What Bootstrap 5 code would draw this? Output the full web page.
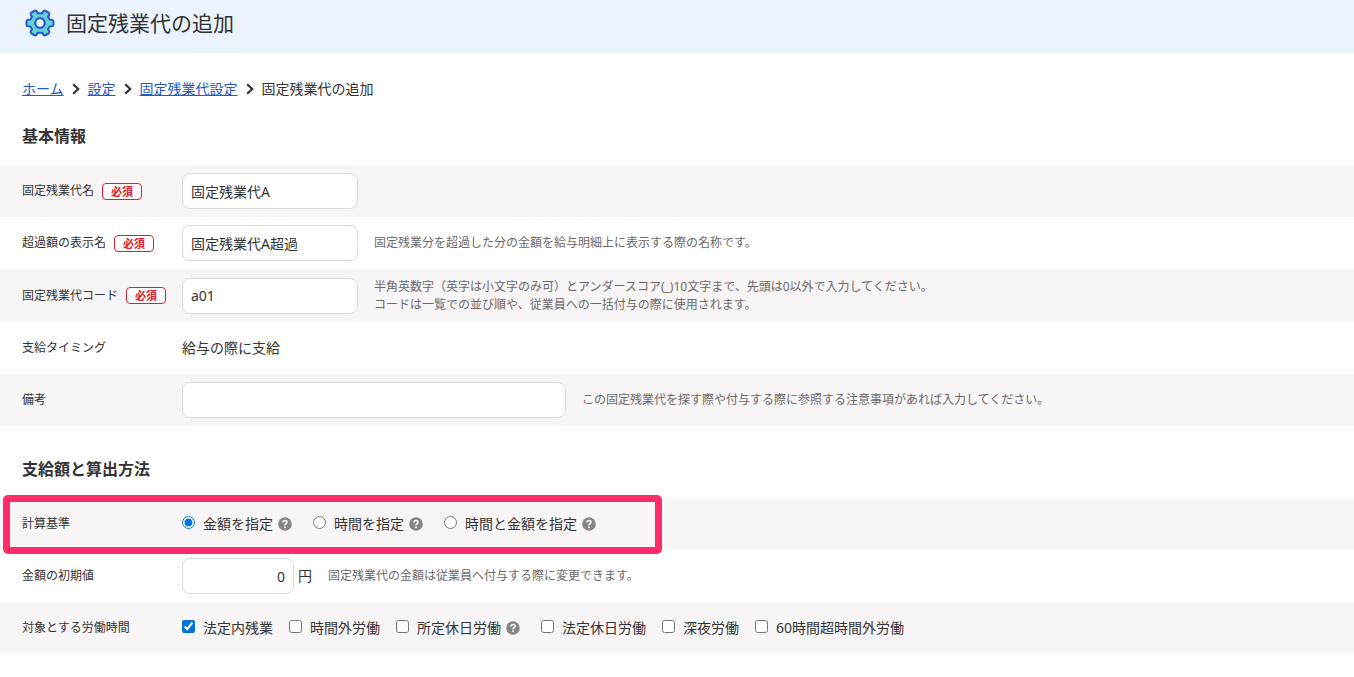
<!DOCTYPE html>
<html lang="ja">
<head>
<meta charset="utf-8">
<meta name="viewport" content="width=device-width, initial-scale=1">
<title>固定残業代の追加</title>
<link href="https://cdn.jsdelivr.net/npm/bootstrap@5.3.0/dist/css/bootstrap.min.css" rel="stylesheet">
<style>
  body { font-family: "Noto Sans", "Noto Sans CJK JP", sans-serif; font-size: 14px; line-height: 20px; color: #333; background: #fff; }
  .page-head { background: #ebf3ff; min-height: 53px; padding: 0 22px 8px; }
  .gear { margin: 0 3px; }
  .page-title { font-size: 21px; line-height: 28px; font-weight: 400; }
  .crumbs { padding: 26px 22px 0; }
  .crumbs a { color: #2359c4; }
  .section-title { font-size: 16px; line-height: 24px; font-weight: 700; padding: 0 22px; }
  .first-title { margin: 25px 0 17px; }
  .next-title { margin: 31px 0 17px; }
  .form-line { min-height: 52px; padding: 8px 22px; }
  .form-line:nth-child(odd) { background: #f7f5f6; }
  .tall-line { min-height: 53px; }
  .line-name { width: 160px; flex: none; font-size: 12px; line-height: 18px; }
  .must { border: 1px solid #dc1e32; border-radius: 4px; color: #dc1e32; background: #fff; font-size: 11px; line-height: 15px; font-weight: 700; width: 40px; text-align: center; }
  .field { height: 36px; padding: 0 8px; border: 1px solid #dcdadb; border-radius: 8px; font-size: 14px; color: #333; width: 176px; flex: none; }
  .field-wide { width: 384px; }
  .field-money { width: 112px; text-align: right; }
  .hint { font-size: 12px; line-height: 18px; color: #6b6969; }
  .choice input { width: 13px; height: 13px; margin: 0 8px 3px 0; accent-color: #0075d7; }
  .help { width: 14px; height: 14px; margin: 0 5px; border: 0; padding: 0; background: none; line-height: 0; }
  .help svg { width: 14px; height: 14px; }
  .choices { column-gap: 16px; }
  .focus-frame { position: absolute; left: 3px; top: -3px; width: 659px; height: 59px; border: 7px solid #ff2c69; border-radius: 5px; pointer-events: none; z-index: 1; }
</style>
</head>
<body>
<svg class="d-none">
  <symbol id="q" viewBox="0 0 14 14"><circle cx="7" cy="7" r="6.8" fill="#898785"/><path d="M5 5.6C5 4.3 5.9 3.6 7 3.6s2 .7 2 1.7C9 6.6 7 6.6 7 8.2" fill="none" stroke="#fff" stroke-width="1.5"/><circle cx="7" cy="10.2" r=".95" fill="#fff"/></symbol>
  <symbol id="chev" viewBox="0 0 8 12"><path d="M1.2 1.2 6.2 6l-5 4.8" fill="none" stroke="#333" stroke-width="2.2"/></symbol>
</svg>
<header class="page-head d-flex align-items-center">
  <svg class="gear flex-shrink-0" width="30" height="30" viewBox="0 0 30 30" aria-hidden="true">
    <path d="M24.500 11.500L27 11.700Q28.500 12 28.500 13.300V16.700Q28.500 18 27 18.300L24.500 18.500Q24 19.800 23 21L24.200 23.200Q24.700 24.600 23.600 25.400L20.800 27.200Q19.500 27.800 18.500 26.800L17 24.700H13L11.500 26.800Q10.500 27.800 9.200 27.200L6.400 25.400Q5.300 24.600 5.800 23.200L7 21Q6 19.800 5.500 18.500L3 18.300Q1.500 18 1.500 16.700V13.300Q1.500 12 3 11.700L5.500 11.500Q6 10.200 7 9L5.800 6.800Q5.300 5.400 6.400 4.600L9.200 2.800Q10.500 2.200 11.500 3.200L13 5.300H17L18.500 3.200Q19.500 2.200 20.800 2.800L23.600 4.600Q24.700 5.400 24.200 6.800L23 9Q24 10.200 24.500 11.500Z" fill="#66d0d4" stroke="#2359c9" stroke-width="2" stroke-linejoin="round"/>
    <circle cx="15" cy="15" r="4.800" fill="#ebf3ff" stroke="#2359c9" stroke-width="2.200"/>
  </svg>
  <h1 class="page-title m-0 ps-2">固定残業代の追加</h1>
</header>
<main class="pb-4">
  <nav class="crumbs d-flex align-items-center gap-2" aria-label="パンくず">
    <a href="#">ホーム</a><svg width="8" height="12"><use href="#chev"/></svg>
    <a href="#">設定</a><svg width="8" height="12"><use href="#chev"/></svg>
    <a href="#">固定残業代設定</a><svg width="8" height="12"><use href="#chev"/></svg>
    <span>固定残業代の追加</span>
  </nav>

  <h2 class="section-title first-title">基本情報</h2>
  <div>
    <div class="form-line d-flex align-items-center">
      <div class="line-name d-flex align-items-center gap-2"><label for="name">固定残業代名</label><span class="must">必須</span></div>
      <input class="field" id="name" type="text" value="固定残業代A">
    </div>
    <div class="form-line d-flex align-items-center">
      <div class="line-name d-flex align-items-center gap-2"><label for="over">超過額の表示名</label><span class="must">必須</span></div>
      <input class="field" id="over" type="text" value="固定残業代A超過">
      <span class="hint ms-3">固定残業分を超過した分の金額を給与明細上に表示する際の名称です。</span>
    </div>
    <div class="form-line tall-line d-flex align-items-center">
      <div class="line-name d-flex align-items-center gap-2"><label for="code">固定残業代コード</label><span class="must">必須</span></div>
      <input class="field" id="code" type="text" value="a01">
      <span class="hint ms-3">半角英数字（英字は小文字のみ可）とアンダースコア(_)10文字まで、先頭は0以外で入力してください。<br>コードは一覧での並び順や、従業員への一括付与の際に使用されます。</span>
    </div>
    <div class="form-line d-flex align-items-center">
      <div class="line-name">支給タイミング</div>
      <span>給与の際に支給</span>
    </div>
    <div class="form-line d-flex align-items-center">
      <label class="line-name" for="memo">備考</label>
      <input class="field field-wide" id="memo" type="text">
      <span class="hint ms-3">この固定残業代を探す際や付与する際に参照する注意事項があれば入力してください。</span>
    </div>
  </div>

  <h2 class="section-title next-title">支給額と算出方法</h2>
  <div>
    <div class="form-line d-flex align-items-center position-relative">
      <div class="line-name" id="basis">計算基準</div>
      <div class="choices d-flex flex-wrap" role="radiogroup" aria-labelledby="basis">
        <div class="choice d-flex align-items-center"><input type="radio" name="basis" id="b1" checked><label for="b1">金額を指定</label><button type="button" class="help" aria-label="ヘルプ"><svg><use href="#q"/></svg></button></div>
        <div class="choice d-flex align-items-center"><input type="radio" name="basis" id="b2"><label for="b2">時間を指定</label><button type="button" class="help" aria-label="ヘルプ"><svg><use href="#q"/></svg></button></div>
        <div class="choice d-flex align-items-center"><input type="radio" name="basis" id="b3"><label for="b3">時間と金額を指定</label><button type="button" class="help" aria-label="ヘルプ"><svg><use href="#q"/></svg></button></div>
      </div>
      <div class="focus-frame"></div>
    </div>
    <div class="form-line d-flex align-items-center">
      <label class="line-name" for="amount">金額の初期値</label>
      <input class="field field-money" id="amount" type="text" value="0">
      <span class="ms-1">円</span>
      <span class="hint ms-3">固定残業代の金額は従業員へ付与する際に変更できます。</span>
    </div>
    <div class="form-line d-flex align-items-center">
      <div class="line-name">対象とする労働時間</div>
      <div class="choices d-flex flex-wrap">
        <div class="choice d-flex align-items-center"><input type="checkbox" id="c1" checked><label for="c1">法定内残業</label></div>
        <div class="choice d-flex align-items-center"><input type="checkbox" id="c2"><label for="c2">時間外労働</label></div>
        <div class="choice d-flex align-items-center"><input type="checkbox" id="c3"><label for="c3">所定休日労働</label><button type="button" class="help" aria-label="ヘルプ"><svg><use href="#q"/></svg></button></div>
        <div class="choice d-flex align-items-center"><input type="checkbox" id="c4"><label for="c4">法定休日労働</label></div>
        <div class="choice d-flex align-items-center"><input type="checkbox" id="c5"><label for="c5">深夜労働</label></div>
        <div class="choice d-flex align-items-center"><input type="checkbox" id="c6"><label for="c6">60時間超時間外労働</label></div>
      </div>
    </div>
  </div>
</main>
<script src="https://cdn.jsdelivr.net/npm/bootstrap@5.3.0/dist/js/bootstrap.bundle.min.js"></script>
</body>
</html>
